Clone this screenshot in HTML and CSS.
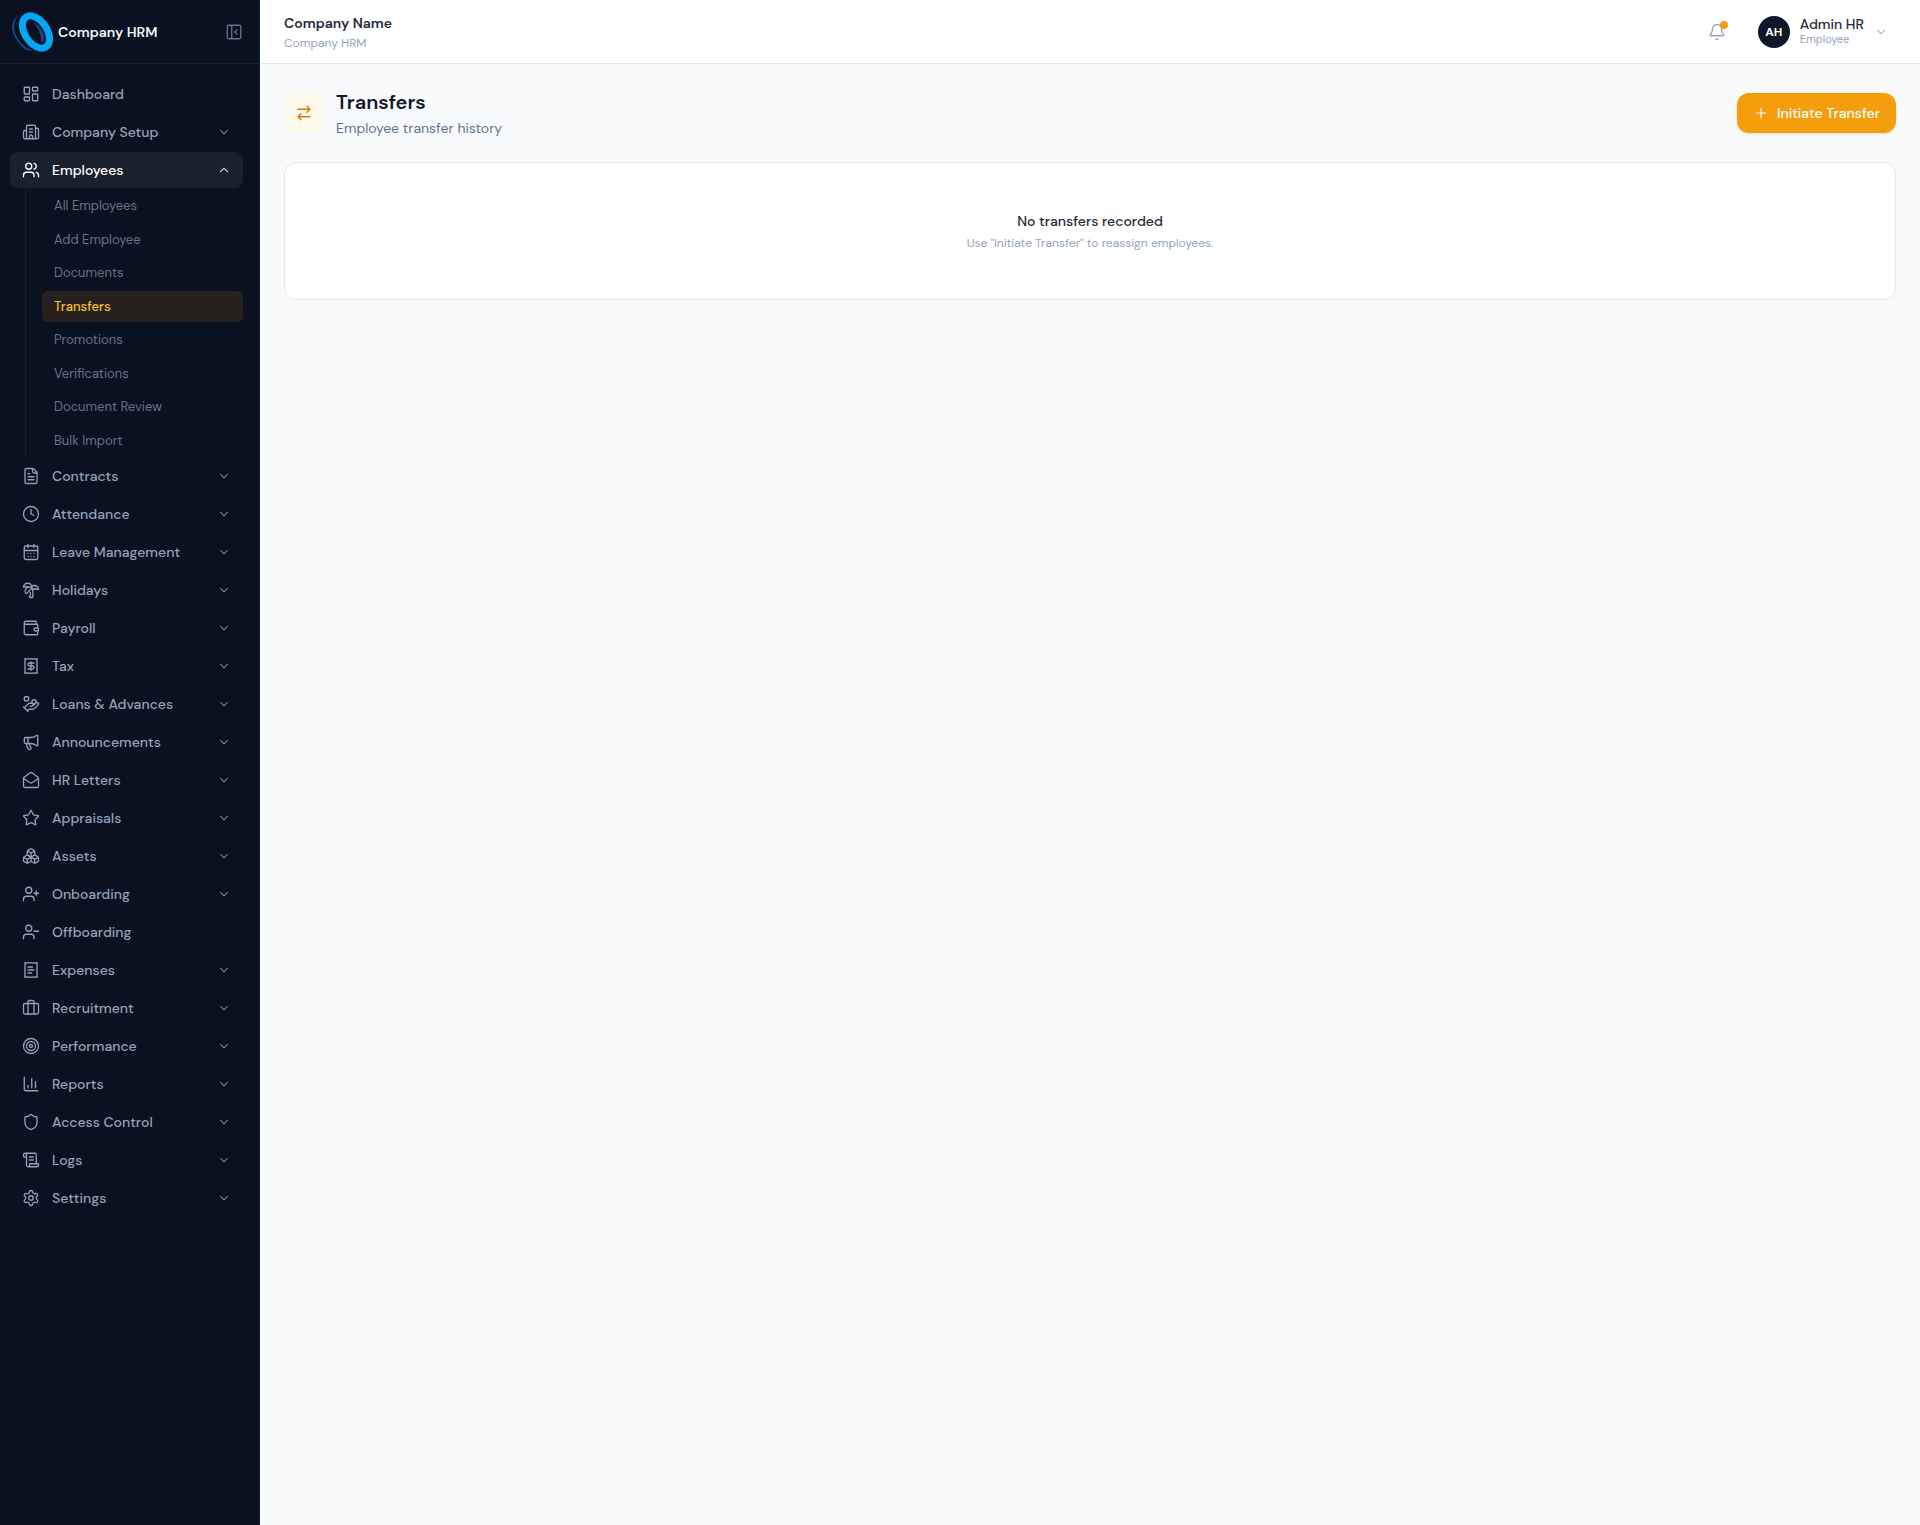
FILE: index.html
```html
<!DOCTYPE html>
<html lang="en">
<head>
    <meta charset="UTF-8">
    <meta name="viewport" content="width=device-width, initial-scale=1.0">
    <title>Transfers - Company HRM</title>
    <link rel="stylesheet" href="styles.css">
</head>
<body>
    <!-- Icon sprite -->
    <svg class="sprite" aria-hidden="true">
        <symbol id="dashboard" viewBox="0 0 24 24"><rect width="7" height="9" x="3" y="3" rx="1"/><rect width="7" height="5" x="14" y="3" rx="1"/><rect width="7" height="9" x="14" y="12" rx="1"/><rect width="7" height="5" x="3" y="16" rx="1"/></symbol>
        <symbol id="building" viewBox="0 0 24 24"><path d="M10 12h4M10 8h4M14 21v-3a2 2 0 0 0-4 0v3M6 10H4a2 2 0 0 0-2 2v7a2 2 0 0 0 2 2h16a2 2 0 0 0 2-2V9a2 2 0 0 0-2-2h-2M6 21V5a2 2 0 0 1 2-2h8a2 2 0 0 1 2 2v16"/></symbol>
        <symbol id="users" viewBox="0 0 24 24"><path d="M16 21v-2a4 4 0 0 0-4-4H6a4 4 0 0 0-4 4v2M16 3.128a4 4 0 0 1 0 7.744M22 21v-2a4 4 0 0 0-3-3.87"/><circle cx="9" cy="7" r="4"/></symbol>
        <symbol id="file" viewBox="0 0 24 24"><path d="M15 2H6a2 2 0 0 0-2 2v16a2 2 0 0 0 2 2h12a2 2 0 0 0 2-2V7ZM14 2v4a2 2 0 0 0 2 2h4M10 9H8M16 13H8M16 17H8"/></symbol>
        <symbol id="clock" viewBox="0 0 24 24"><circle cx="12" cy="12" r="10"/><path d="M12 6v6l4 2"/></symbol>
        <symbol id="calendar" viewBox="0 0 24 24"><rect width="18" height="18" x="3" y="4" rx="2"/><path d="M8 2v4M16 2v4M3 10h18M8 14h.01M12 14h.01M16 14h.01M8 18h.01M12 18h.01M16 18h.01"/></symbol>
        <symbol id="palm" viewBox="0 0 24 24"><path d="M13 8c0-2.76-2.46-5-5.5-5S2 5.24 2 8h2l1-1 1 1h4M13 7.14A5.82 5.82 0 0 1 16.5 6c3.04 0 5.5 2.24 5.5 5h-3l-1-1-1 1h-3M5.89 9.71c-2.15 2.15-2.3 5.47-.35 7.43l4.24-4.25.7-.7.71-.71 2.12-2.12c-1.95-1.96-5.27-1.8-7.42.35M11 15.5c.5 2.5-.17 4.5-1 6.5h4c2-5.5-.5-12-1-14"/></symbol>
        <symbol id="wallet" viewBox="0 0 24 24"><path d="M19 7V4a1 1 0 0 0-1-1H5a2 2 0 0 0 0 4h15a1 1 0 0 1 1 1v4h-3a2 2 0 0 0 0 4h3a1 1 0 0 0 1-1v-2a1 1 0 0 0-1-1M3 5v14a2 2 0 0 0 2 2h15a1 1 0 0 0 1-1v-4"/></symbol>
        <symbol id="tax" viewBox="0 0 24 24"><path d="M4 2v20l2-1 2 1 2-1 2 1 2-1 2 1 2-1 2 1V2l-2 1-2-1-2 1-2-1-2 1-2-1-2 1ZM16 8h-6a2 2 0 1 0 0 4h4a2 2 0 1 1 0 4H8M12 17.5v-11"/></symbol>
        <symbol id="coins" viewBox="0 0 24 24"><path d="M11 15h2a2 2 0 1 0 0-4h-3c-.6 0-1.1.2-1.4.6L3 17M7 21l1.6-1.4c.3-.4.8-.6 1.4-.6h4c1.1 0 2.1-.4 2.8-1.2l4.6-4.4a2 2 0 0 0-2.75-2.91l-4.2 3.9M2 16l6 6"/><circle cx="16" cy="9" r="2.9"/><circle cx="6" cy="5" r="3"/></symbol>
        <symbol id="megaphone" viewBox="0 0 24 24"><path d="M11 6a13 13 0 0 0 8.4-2.8A1 1 0 0 1 21 4v12a1 1 0 0 1-1.6.8A13 13 0 0 0 11 14H5a2 2 0 0 1-2-2V8a2 2 0 0 1 2-2zM6 14a12 12 0 0 0 2.4 7.2 2 2 0 0 0 3.2-2.4A8 8 0 0 1 10 14M8 6v8"/></symbol>
        <symbol id="mail" viewBox="0 0 24 24"><path d="M21.2 8.4c.5.38.8.97.8 1.6v10a2 2 0 0 1-2 2H4a2 2 0 0 1-2-2V10a2 2 0 0 1 .8-1.6l8-6a2 2 0 0 1 2.4 0l8 6ZM22 10l-8.97 5.7a1.94 1.94 0 0 1-2.06 0L2 10"/></symbol>
        <symbol id="star" viewBox="0 0 24 24"><path d="M11.525 2.295a.53.53 0 0 1 .95 0l2.31 4.679a2.123 2.123 0 0 0 1.595 1.16l5.166.756a.53.53 0 0 1 .294.904l-3.736 3.638a2.123 2.123 0 0 0-.611 1.878l.882 5.14a.53.53 0 0 1-.771.56l-4.618-2.428a2.122 2.122 0 0 0-1.973 0L6.396 21.01a.53.53 0 0 1-.77-.56l.881-5.139a2.122 2.122 0 0 0-.611-1.879L2.16 9.795a.53.53 0 0 1 .294-.906l5.165-.755a2.122 2.122 0 0 0 1.597-1.16z"/></symbol>
        <symbol id="boxes" viewBox="0 0 24 24"><path d="M2.97 12.92A2 2 0 0 0 2 14.63v3.24a2 2 0 0 0 .97 1.71l3 1.8a2 2 0 0 0 2.06 0L12 19v-5.5l-5-3-4.03 2.42ZM7 16.5l-4.74-2.85M7 16.5l5-3M7 16.5v5.17M12 13.5V19l3.97 2.38a2 2 0 0 0 2.06 0l3-1.8a2 2 0 0 0 .97-1.71v-3.24a2 2 0 0 0-.97-1.71L17 10.5l-5 3ZM17 16.5l-5-3M17 16.5l4.74-2.85M17 16.5v5.17M7.97 4.42A2 2 0 0 0 7 6.13v4.37l5 3 5-3V6.13a2 2 0 0 0-.97-1.71l-3-1.8a2 2 0 0 0-2.06 0l-3 1.8ZM12 8 7.26 5.15M12 8l4.74-2.85M12 13.5V8"/></symbol>
        <symbol id="user-plus" viewBox="0 0 24 24"><path d="M16 21v-2a4 4 0 0 0-4-4H6a4 4 0 0 0-4 4v2M19 8v6M22 11h-6"/><circle cx="9" cy="7" r="4"/></symbol>
        <symbol id="user-minus" viewBox="0 0 24 24"><path d="M16 21v-2a4 4 0 0 0-4-4H6a4 4 0 0 0-4 4v2M22 11h-6"/><circle cx="9" cy="7" r="4"/></symbol>
        <symbol id="receipt" viewBox="0 0 24 24"><path d="M4 2v20l2-1 2 1 2-1 2 1 2-1 2 1 2-1 2 1V2l-2 1-2-1-2 1-2-1-2 1-2-1-2 1ZM14 8H8M16 12H8M13 16H8"/></symbol>
        <symbol id="briefcase" viewBox="0 0 24 24"><path d="M16 20V4a2 2 0 0 0-2-2h-4a2 2 0 0 0-2 2v16"/><rect width="20" height="14" x="2" y="6" rx="2"/></symbol>
        <symbol id="target" viewBox="0 0 24 24"><circle cx="12" cy="12" r="10"/><circle cx="12" cy="12" r="6"/><circle cx="12" cy="12" r="2"/></symbol>
        <symbol id="chart" viewBox="0 0 24 24"><path d="M3 3v16a2 2 0 0 0 2 2h16M18 17V9M13 17V5M8 17v-3"/></symbol>
        <symbol id="shield" viewBox="0 0 24 24"><path d="M20 13c0 5-3.5 7.5-7.66 8.95a1 1 0 0 1-.67-.01C7.5 20.5 4 18 4 13V6a1 1 0 0 1 1-1c2 0 4.5-1.2 6.24-2.72a1.17 1.17 0 0 1 1.52 0C14.51 3.81 17 5 19 5a1 1 0 0 1 1 1z"/></symbol>
        <symbol id="scroll" viewBox="0 0 24 24"><path d="M15 12h-5M15 8h-5M19 17V5a2 2 0 0 0-2-2H4M8 21h12a2 2 0 0 0 2-2v-1a1 1 0 0 0-1-1H11a1 1 0 0 0-1 1v1a2 2 0 1 1-4 0V5a2 2 0 1 0-4 0v2a1 1 0 0 0 1 1h3"/></symbol>
        <symbol id="settings" viewBox="0 0 24 24"><path d="M9.671 4.136a2.34 2.34 0 0 1 4.659 0 2.34 2.34 0 0 0 3.319 1.915 2.34 2.34 0 0 1 2.33 4.033 2.34 2.34 0 0 0 0 3.831 2.34 2.34 0 0 1-2.33 4.033 2.34 2.34 0 0 0-3.319 1.915 2.34 2.34 0 0 1-4.659 0 2.34 2.34 0 0 0-3.32-1.915 2.34 2.34 0 0 1-2.33-4.033 2.34 2.34 0 0 0 0-3.831A2.34 2.34 0 0 1 6.35 6.051a2.34 2.34 0 0 0 3.319-1.915"/><circle cx="12" cy="12" r="3"/></symbol>
        <symbol id="bell" viewBox="0 0 24 24"><path d="M10.268 21a2 2 0 0 0 3.464 0M3.262 15.326A1 1 0 0 0 4 17h16a1 1 0 0 0 .74-1.673C19.41 13.956 18 12.499 18 8A6 6 0 0 0 6 8c0 4.499-1.411 5.956-2.738 7.326"/></symbol>
        <symbol id="panel" viewBox="0 0 24 24"><rect width="18" height="18" x="3" y="3" rx="2"/><path d="M9 3v18M16 15l-3-3 3-3"/></symbol>
        <symbol id="swap" viewBox="0 0 24 24"><path d="m16 3 4 4-4 4M20 7H4M8 21l-4-4 4-4M4 17h16"/></symbol>
        <symbol id="plus" viewBox="0 0 24 24"><path d="M5 12h14M12 5v14"/></symbol>
        <symbol id="down" viewBox="0 0 24 24"><path d="m6 9 6 6 6-6"/></symbol>
        <symbol id="up" viewBox="0 0 24 24"><path d="m18 15-6-6-6 6"/></symbol>
    </svg>

    <div class="layout">
        <aside class="sidebar">
            <div class="brand">
                <svg class="logo" viewBox="0 0 44 44" aria-hidden="true">
                    <path class="logo-shade" d="M8 6C-1 12 1 24 9 33c4 6 10 9 14 7-7-1-12-6-16-13C3 20 3 12 8 6Z"/>
                    <path class="logo-shade" d="M23 12c7 3 12 12 11 18-1 3-3 2-3 0 0-7-3-12-8-18Z"/>
                    <ellipse class="logo-ring" cx="26" cy="22" rx="18" ry="11" transform="rotate(56 26 22)"/>
                </svg>
                <span class="brand-name">Company HRM</span>
                <button type="button" class="collapse-button" aria-label="Collapse sidebar"><svg class="icon"><use href="#panel"/></svg></button>
            </div>
            <nav class="nav">
                <a href="#" class="nav-item"><svg class="icon"><use href="#dashboard"/></svg><span>Dashboard</span></a>
                <button type="button" class="nav-item"><svg class="icon"><use href="#building"/></svg><span>Company Setup</span><svg class="chevron"><use href="#down"/></svg></button>
                <button type="button" class="nav-item open" aria-expanded="true"><svg class="icon"><use href="#users"/></svg><span>Employees</span><svg class="chevron"><use href="#up"/></svg></button>
                <div class="submenu">
                    <a href="#">All Employees</a>
                    <a href="#">Add Employee</a>
                    <a href="#">Documents</a>
                    <a href="#" class="active">Transfers</a>
                    <a href="#">Promotions</a>
                    <a href="#">Verifications</a>
                    <a href="#">Document Review</a>
                    <a href="#">Bulk Import</a>
                </div>
                <button type="button" class="nav-item"><svg class="icon"><use href="#file"/></svg><span>Contracts</span><svg class="chevron"><use href="#down"/></svg></button>
                <button type="button" class="nav-item"><svg class="icon"><use href="#clock"/></svg><span>Attendance</span><svg class="chevron"><use href="#down"/></svg></button>
                <button type="button" class="nav-item"><svg class="icon"><use href="#calendar"/></svg><span>Leave Management</span><svg class="chevron"><use href="#down"/></svg></button>
                <button type="button" class="nav-item"><svg class="icon"><use href="#palm"/></svg><span>Holidays</span><svg class="chevron"><use href="#down"/></svg></button>
                <button type="button" class="nav-item"><svg class="icon"><use href="#wallet"/></svg><span>Payroll</span><svg class="chevron"><use href="#down"/></svg></button>
                <button type="button" class="nav-item"><svg class="icon"><use href="#tax"/></svg><span>Tax</span><svg class="chevron"><use href="#down"/></svg></button>
                <button type="button" class="nav-item"><svg class="icon"><use href="#coins"/></svg><span>Loans &amp; Advances</span><svg class="chevron"><use href="#down"/></svg></button>
                <button type="button" class="nav-item"><svg class="icon"><use href="#megaphone"/></svg><span>Announcements</span><svg class="chevron"><use href="#down"/></svg></button>
                <button type="button" class="nav-item"><svg class="icon"><use href="#mail"/></svg><span>HR Letters</span><svg class="chevron"><use href="#down"/></svg></button>
                <button type="button" class="nav-item"><svg class="icon"><use href="#star"/></svg><span>Appraisals</span><svg class="chevron"><use href="#down"/></svg></button>
                <button type="button" class="nav-item"><svg class="icon"><use href="#boxes"/></svg><span>Assets</span><svg class="chevron"><use href="#down"/></svg></button>
                <button type="button" class="nav-item"><svg class="icon"><use href="#user-plus"/></svg><span>Onboarding</span><svg class="chevron"><use href="#down"/></svg></button>
                <a href="#" class="nav-item"><svg class="icon"><use href="#user-minus"/></svg><span>Offboarding</span></a>
                <button type="button" class="nav-item"><svg class="icon"><use href="#receipt"/></svg><span>Expenses</span><svg class="chevron"><use href="#down"/></svg></button>
                <button type="button" class="nav-item"><svg class="icon"><use href="#briefcase"/></svg><span>Recruitment</span><svg class="chevron"><use href="#down"/></svg></button>
                <button type="button" class="nav-item"><svg class="icon"><use href="#target"/></svg><span>Performance</span><svg class="chevron"><use href="#down"/></svg></button>
                <button type="button" class="nav-item"><svg class="icon"><use href="#chart"/></svg><span>Reports</span><svg class="chevron"><use href="#down"/></svg></button>
                <button type="button" class="nav-item"><svg class="icon"><use href="#shield"/></svg><span>Access Control</span><svg class="chevron"><use href="#down"/></svg></button>
                <button type="button" class="nav-item"><svg class="icon"><use href="#scroll"/></svg><span>Logs</span><svg class="chevron"><use href="#down"/></svg></button>
                <button type="button" class="nav-item"><svg class="icon"><use href="#settings"/></svg><span>Settings</span><svg class="chevron"><use href="#down"/></svg></button>
            </nav>
        </aside>

        <div class="main">
            <header class="topbar">
                <div class="company">
                    <div class="company-name">Company Name</div>
                    <div class="company-sub">Company HRM</div>
                </div>
                <div class="topbar-actions">
                    <button type="button" class="bell-button" aria-label="Notifications">
                        <svg class="icon"><use href="#bell"/></svg>
                        <span class="bell-dot"></span>
                    </button>
                    <button type="button" class="user-button">
                        <span class="avatar">AH</span>
                        <span class="user-text">
                            <span class="user-name">Admin HR</span>
                            <span class="user-role">Employee</span>
                        </span>
                        <svg class="chevron"><use href="#down"/></svg>
                    </button>
                </div>
            </header>

            <main class="content">
                <div class="page-header">
                    <div class="page-icon"><svg class="icon"><use href="#swap"/></svg></div>
                    <div class="page-heading">
                        <h1>Transfers</h1>
                        <p>Employee transfer history</p>
                    </div>
                    <button type="button" class="primary-button"><svg class="button-icon"><use href="#plus"/></svg>Initiate Transfer</button>
                </div>
                <section class="card">
                    <p class="empty-title">No transfers recorded</p>
                    <p class="empty-text">Use "Initiate Transfer" to reassign employees.</p>
                </section>
            </main>
        </div>
    </div>
</body>
</html>
```
FILE: styles.css
```css
* {
    box-sizing: border-box;
}
body {
    margin: 0;
    font-family: "DM Sans", Inter, "Liberation Sans", sans-serif;
    font-size: 14px;
    line-height: 20px;
    color: #0f172a;
    background-color: #f8fafc;
}
h1, p {
    margin: 0;
}
a {
    color: inherit;
    text-decoration: none;
}
button {
    font: inherit;
    color: inherit;
    background: none;
    border: none;
    padding: 0;
    cursor: pointer;
}
svg {
    fill: none;
    stroke: currentColor;
    stroke-width: 1.75;
    stroke-linecap: round;
    stroke-linejoin: round;
    flex-shrink: 0;
}
.sprite {
    display: none;
}
.icon {
    width: 18px;
    height: 18px;
}
.chevron {
    width: 14px;
    height: 14px;
}
.layout {
    display: flex;
    min-height: 100vh;
}

/* Sidebar */
.sidebar {
    width: 260px;
    flex-shrink: 0;
    background-color: #0a1120;
    border-right: 1px solid #171e2c;
    color: #94a3b8;
}
.brand {
    display: flex;
    align-items: center;
    gap: 4px;
    height: 64px;
    padding: 0 16px 0 10px;
    border-bottom: 1px solid #1a2130;
}
.logo {
    width: 44px;
    height: 44px;
    stroke: none;
}
.logo-ring {
    stroke: #00a8f5;
    stroke-width: 7;
}
.logo-shade {
    fill: #134a8c;
}
.brand-name {
    flex: 1;
    font-weight: 600;
    color: #f1f5f9;
}
.collapse-button {
    display: flex;
    color: #64748b;
}
.nav {
    display: flex;
    flex-direction: column;
    gap: 2px;
    padding: 12px 16px 12px 10px;
}
.nav-item {
    display: flex;
    align-items: center;
    gap: 12px;
    padding: 8px 12px;
    border-radius: 8px;
    font-weight: 500;
    text-align: left;
}
.nav-item span {
    flex: 1;
}
.nav-item.open {
    color: #fff;
    background-color: #1a212e;
}
.submenu {
    display: flex;
    flex-direction: column;
    gap: 2px;
    margin-left: 15px;
    padding-left: 16px;
    border-left: 1px solid #1a2130;
}
.submenu a {
    padding: 6px 12px;
    border-radius: 6px;
    font-size: 13px;
    line-height: 1.5;
    color: #64748b;
}
.submenu .active {
    color: #fbbf24;
    background-color: #26211f;
    font-weight: 500;
}

/* Top bar */
.main {
    flex: 1;
    min-width: 0;
}
.topbar {
    display: flex;
    align-items: center;
    justify-content: space-between;
    height: 64px;
    padding: 0 24px;
    background-color: #fff;
    border-bottom: 1px solid #e2e8f0;
}
.company-name {
    font-weight: 600;
    color: #1e293b;
}
.company-sub {
    margin-top: 2px;
    font-size: 12px;
    line-height: 16px;
    color: #94a3b8;
}
.topbar-actions {
    display: flex;
    align-items: center;
    gap: 16px;
}
.bell-button {
    position: relative;
    display: flex;
    padding: 8px;
    color: #94a3b8;
}
.bell-dot {
    position: absolute;
    top: 6px;
    right: 6px;
    width: 8px;
    height: 8px;
    border-radius: 50%;
    background-color: #f59e0b;
}
.user-button {
    display: flex;
    align-items: center;
    gap: 10px;
    padding: 4px 8px;
    text-align: left;
    color: #94a3b8;
}
.avatar {
    display: flex;
    align-items: center;
    justify-content: center;
    width: 32px;
    height: 32px;
    border-radius: 50%;
    background-color: #0f172a;
    color: #fff;
    font-size: 12px;
    font-weight: 700;
}
.user-text {
    display: flex;
    flex-direction: column;
}
.user-name {
    font-weight: 500;
    line-height: 14px;
    color: #1e293b;
}
.user-role {
    font-size: 11px;
    line-height: 16px;
}

/* Page */
.content {
    padding: 24px;
}
.page-header {
    display: flex;
    align-items: center;
    gap: 12px;
    margin-bottom: 24px;
}
.page-icon {
    display: flex;
    align-items: center;
    justify-content: center;
    width: 40px;
    height: 40px;
    border-radius: 12px;
    background-color: #fffbeb;
    color: #d97706;
}
.page-heading {
    flex: 1;
}
.page-heading h1 {
    font-size: 20px;
    line-height: 28px;
    font-weight: 600;
}
.page-heading p {
    margin-top: 2px;
    color: #64748b;
}
.primary-button {
    display: flex;
    align-items: center;
    gap: 8px;
    padding: 10px 16px;
    border-radius: 12px;
    background-color: #f59e0b;
    color: #fff;
    font-weight: 500;
    box-shadow: 0 1px 3px rgba(0, 0, 0, 0.12);
}
.button-icon {
    width: 16px;
    height: 16px;
}
.card {
    padding: 48px 24px;
    border: 1px solid #e2e8f0;
    border-radius: 12px;
    background-color: #fff;
    text-align: center;
}
.empty-title {
    font-weight: 500;
    color: #1e293b;
}
.empty-text {
    margin-top: 4px;
    font-size: 12px;
    line-height: 16px;
    color: #94a3b8;
}
```
